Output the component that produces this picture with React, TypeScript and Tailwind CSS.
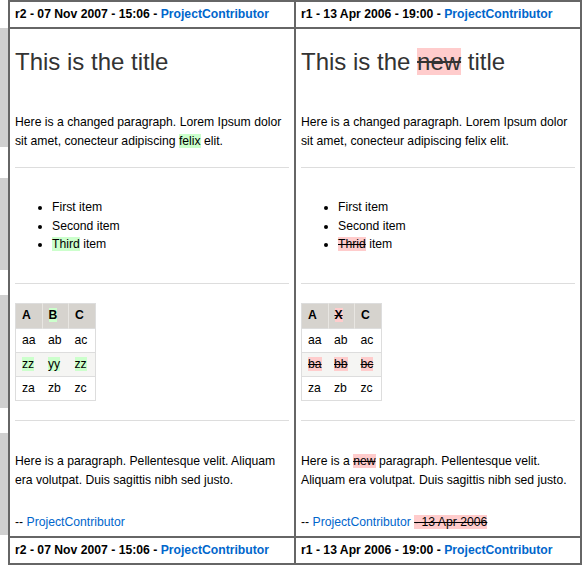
import React from 'react';

type Side = 'new' | 'old';

const Ins: React.FC<{ children: React.ReactNode }> = ({ children }) => (
    <span className="bg-[#ccffcc]">{children}</span>
);

const Del: React.FC<{ children: React.ReactNode }> = ({ children }) => (
    <span className="bg-[#ffcccc] line-through">{children}</span>
);

const Link: React.FC<{ children: React.ReactNode }> = ({ children }) => (
    <a href="#" className="text-[#0066cc]">{children}</a>
);

const RevHeader: React.FC<{ label: string }> = ({ label }) => (
    <div className="bg-white px-[5px] h-[25px] leading-[25px] text-[12.2px] font-bold text-black whitespace-nowrap overflow-hidden">
        {label} - <span className="text-[#0066cc]">ProjectContributor</span>
    </div>
);

const DiffTable: React.FC<{ side: Side }> = ({ side }) => {
    const head = side === 'new'
        ? [<span key="a">A</span>, <Ins key="b">B</Ins>, <span key="c">C</span>]
        : [<span key="a">A</span>, <Del key="x">X</Del>, <span key="c">C</span>];
    const rows = side === 'new'
        ? [
            ['aa', 'ab', 'ac'].map(t => <span key={t}>{t}</span>),
            [<Ins key="1">zz</Ins>, <Ins key="2">yy</Ins>, <Ins key="3">zz</Ins>],
            ['za', 'zb', 'zc'].map(t => <span key={t}>{t}</span>),
        ]
        : [
            ['aa', 'ab', 'ac'].map(t => <span key={t}>{t}</span>),
            [<Del key="1">ba</Del>, <Del key="2">bb</Del>, <Del key="3">bc</Del>],
            ['za', 'zb', 'zc'].map(t => <span key={t}>{t}</span>),
        ];

    return (
        <table className="mt-[19px] border border-[#dddddd] border-collapse text-[12.2px] text-black">
            <thead>
                <tr className="bg-[#d6d3ce]">
                    {head.map((h, i) => (
                        <th key={i} className={`w-[26.5px] h-[25px] pl-[6px] pr-0 text-left font-bold ${i > 0 ? 'border-l border-[#e8e6e2]' : ''}`}>{h}</th>
                    ))}
                </tr>
            </thead>
            <tbody>
                {rows.map((r, ri) => (
                    <tr key={ri} className={`border-t border-[#dddddd] ${ri === 1 ? 'bg-[#f5f5f3]' : 'bg-white'}`}>
                        {r.map((c, ci) => (
                            <td key={ci} className="h-[24px] pl-[6px] pr-0">{c}</td>
                        ))}
                    </tr>
                ))}
            </tbody>
        </table>
    );
};

const DiffCell: React.FC<{ side: Side }> = ({ side }) => {
    const isNew = side === 'new';
    return (
        <div className="bg-white px-[5px] pt-[18px] pb-[4px] text-[12.2px] text-black">
            <h1 className="text-[24px] leading-[30px] text-[#333333] whitespace-nowrap">
                {isNew ? 'This is the title' : <>This is the <Del>new</Del> title</>}
            </h1>
            <p className="mt-[36px] leading-[19px]">
                Here is a changed paragraph. Lorem Ipsum dolor sit amet, conecteur adipiscing{' '}
                {isNew ? <Ins>felix</Ins> : 'felix'} elit.
            </p>
            <hr className="mt-[16px] border-[#dddddd]" />

            <ul className="mt-[30px] pl-[37px] list-disc leading-[18.5px]">
                <li>First item</li>
                <li>Second item</li>
                <li>{isNew ? <Ins>Third</Ins> : <Del>Thrid</Del>} item</li>
            </ul>
            <hr className="mt-[29px] border-[#dddddd]" />

            <DiffTable side={side} />
            <hr className="mt-[19px] border-[#dddddd]" />

            <p className="mt-[31px] leading-[19px]">
                {isNew
                    ? 'Here is a paragraph. Pellentesque velit. Aliquam era volutpat. Duis sagittis nibh sed justo.'
                    : <>Here is a <Del>new</Del> paragraph. Pellentesque velit. Aliquam era volutpat. Duis sagittis nibh sed justo.</>}
            </p>
            <p className="mt-[23px] leading-[19px] whitespace-nowrap">
                -- <Link>ProjectContributor</Link>
                {!isNew && <> <Del>- 13 Apr 2006</Del></>}
            </p>
        </div>
    );
};

const App: React.FC = () => {
    const left = 'r2 - 07 Nov 2007 - 15:06';
    const right = 'r1 - 13 Apr 2006 - 19:00';

    return (
        <div className="flex w-[582px] bg-white font-['Liberation_Sans',Arial,sans-serif]">
            {/* change markers in the margin */}
            <div className="w-[8px] shrink-0 flex flex-col pt-[28px]">
                <div className="h-[119px] bg-[#d0d0d0]" />
                <div className="mt-[31px] h-[92px] bg-[#d0d0d0]" />
                <div className="mt-[25px] h-[113px] bg-[#d0d0d0]" />
                <div className="mt-[25px] h-[102px] bg-[#d0d0d0]" />
            </div>

            <div className="w-[574px] grid grid-cols-2 gap-[2px] p-[2px] bg-[#666666]">
                <RevHeader label={left} />
                <RevHeader label={right} />
                <DiffCell side="new" />
                <DiffCell side="old" />
                <RevHeader label={left} />
                <RevHeader label={right} />
            </div>
        </div>
    );
};

export default App;
